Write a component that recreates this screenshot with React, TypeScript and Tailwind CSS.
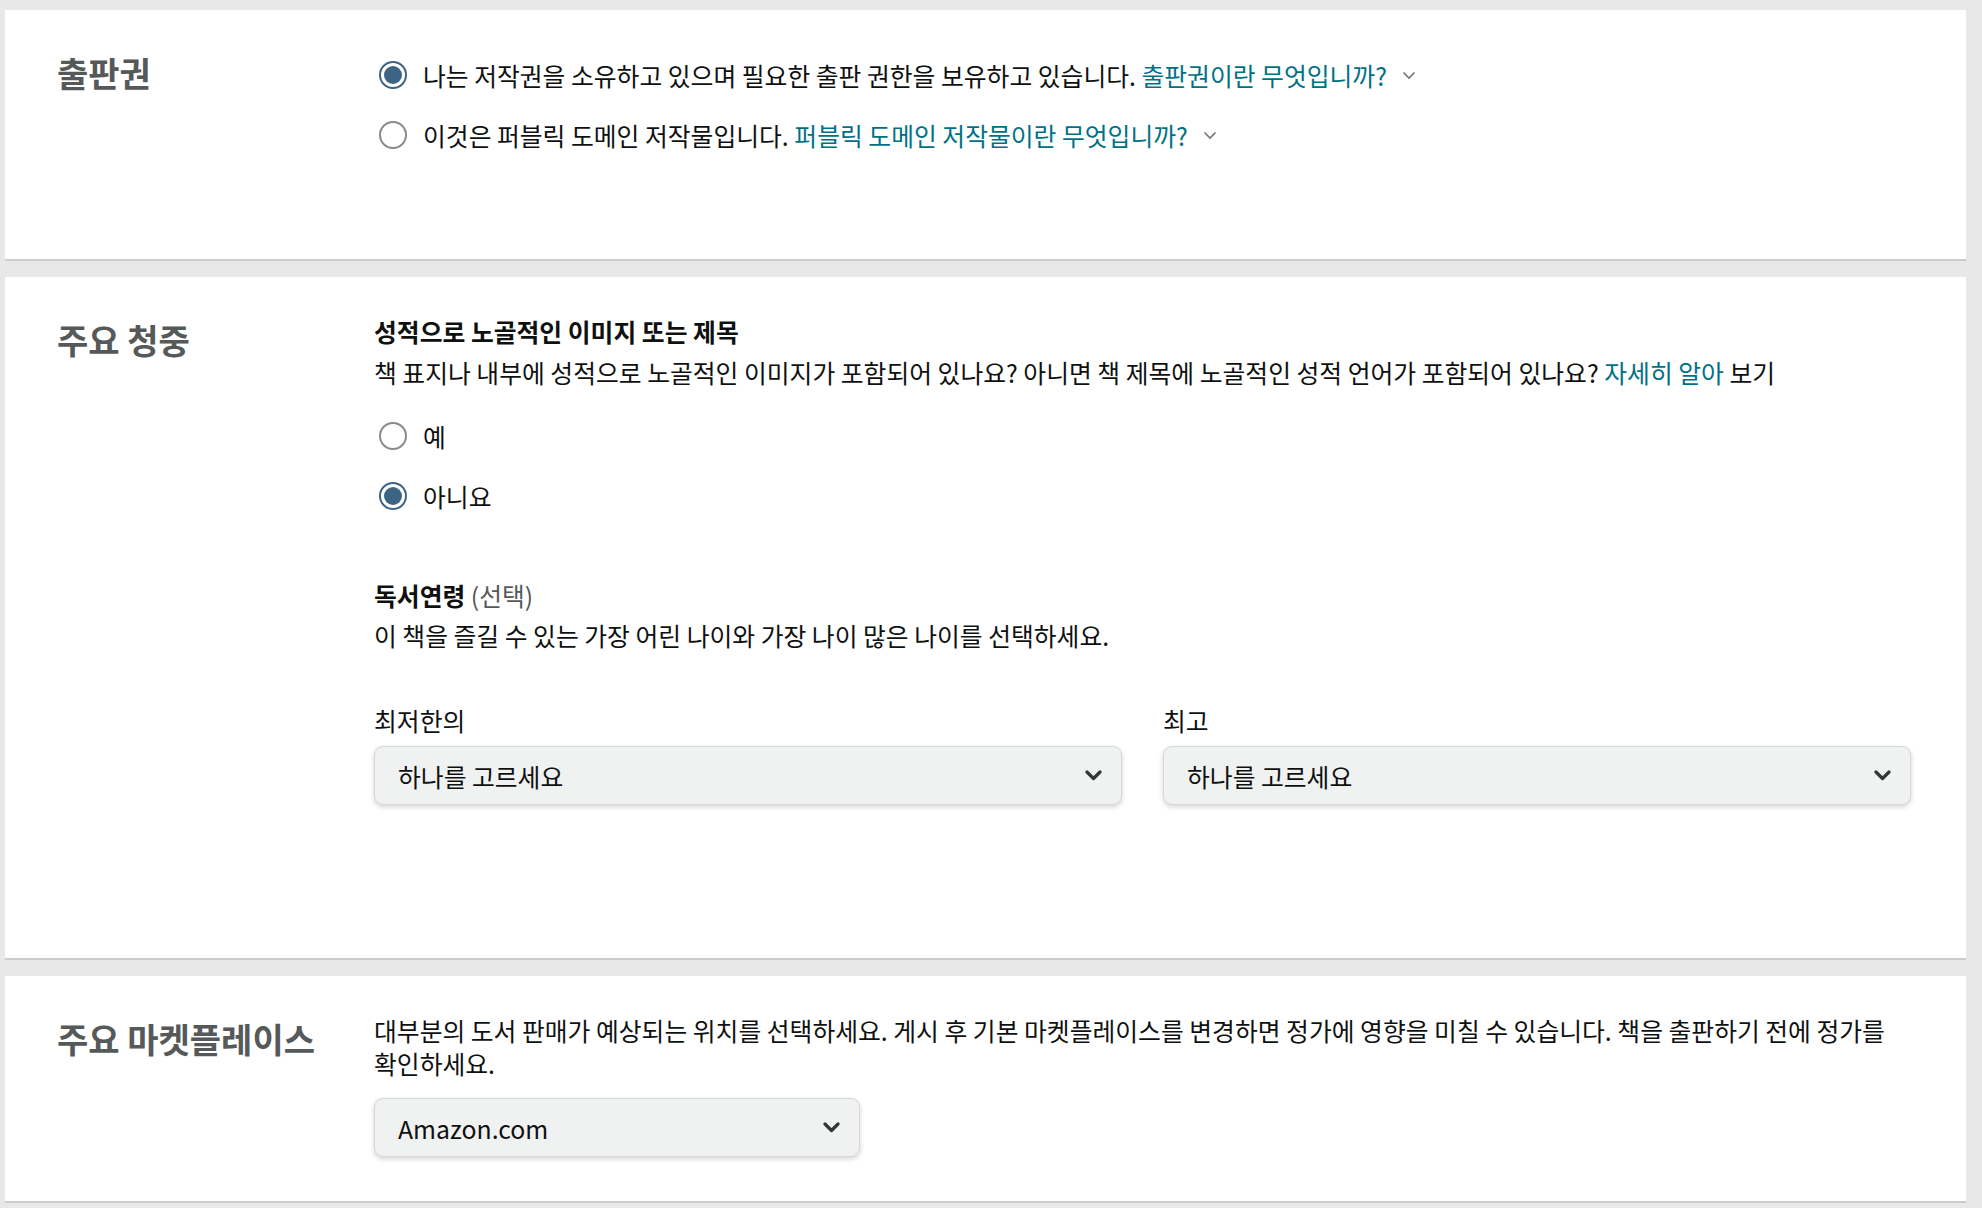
import React from "react";

function Radio({ checked }: { checked: boolean }) {
  return checked ? (
    <span className="ml-[5px] flex h-[28px] w-[28px] shrink-0 items-center justify-center rounded-full border-2 border-[#3d6385] bg-white">
      <span className="h-[18px] w-[18px] rounded-full bg-[#3d6385]" />
    </span>
  ) : (
    <span className="ml-[5px] h-[28px] w-[28px] shrink-0 rounded-full border-2 border-[#8a8a8a] bg-white" />
  );
}

function SmallChevron() {
  return (
    <svg width="14" height="9" viewBox="0 0 14 9" className="ml-[15px] inline-block shrink-0">
      <path d="M1.5 1.5 L7 7 L12.5 1.5" fill="none" stroke="#6f7373" strokeWidth="1.6" />
    </svg>
  );
}

function SelectBox({ value, width }: { value: string; width?: string }) {
  return (
    <div
      className={`flex h-[59px] items-center justify-between rounded-[9px] border border-[#d5d9d9] bg-[#f0f2f2] pl-[23px] pr-[19px] shadow-[0_2px_5px_rgba(15,17,17,0.18)] ${width ?? "w-full"}`}
    >
      <span className="text-[24.8px] text-[#0f1111]">{value}</span>
      <svg width="17" height="11" viewBox="0 0 17 11">
        <path d="M2 2 L8.5 8.5 L15 2" fill="none" stroke="#333636" strokeWidth="3.2" strokeLinecap="round" strokeLinejoin="round" />
      </svg>
    </div>
  );
}

export default function App() {
  return (
    <div className="flex min-h-screen flex-col gap-[16px] bg-[#e8e8e8] pb-[5px] pl-[5px] pr-[16px] pt-[10px] font-['Noto_Sans_CJK_KR','Noto_Sans',sans-serif] text-[24.8px] leading-[34px] text-[#0f1111]">
      {/* 출판권 */}
      <section className="flex border-b-2 border-[#cccccc] bg-white">
        <div className="w-[369px] shrink-0 pl-[52px] pt-[43px]">
          <h2 className="text-[34px] font-bold leading-[40px] text-[#565959]">출판권</h2>
        </div>
        <div className="flex flex-1 flex-col gap-[20px] pb-[104px] pr-[55px] pt-[45px]">
          <div className="flex h-[40px] items-center gap-[16px]">
            <Radio checked />
            <span className="flex items-center">
              <span>
                나는 저작권을 소유하고 있으며 필요한 출판 권한을 보유하고 있습니다.{" "}
                <span className="text-[#007185]">출판권이란 무엇입니까?</span>
              </span>
              <SmallChevron />
            </span>
          </div>
          <div className="flex h-[40px] items-center gap-[16px]">
            <Radio checked={false} />
            <span className="flex items-center">
              <span>
                이것은 퍼블릭 도메인 저작물입니다.{" "}
                <span className="text-[#007185]">퍼블릭 도메인 저작물이란 무엇입니까?</span>
              </span>
              <SmallChevron />
            </span>
          </div>
        </div>
      </section>

      {/* 주요 청중 */}
      <section className="flex border-b-2 border-[#cccccc] bg-white">
        <div className="w-[369px] shrink-0 pl-[52px] pt-[43px]">
          <h2 className="text-[34px] font-bold leading-[40px] text-[#565959]">주요 청중</h2>
        </div>
        <div className="flex flex-1 flex-col pb-[153px] pr-[55px] pt-[37px]">
          <h3 className="font-bold">성적으로 노골적인 이미지 또는 제목</h3>
          <p className="mt-[7px]">
            책 표지나 내부에 성적으로 노골적인 이미지가 포함되어 있나요? 아니면 책 제목에 노골적인 성적 언어가 포함되어 있나요?{" "}
            <span className="text-[#007185]">자세히 알아</span> 보기
          </p>
          <div className="mt-[27px] flex flex-col gap-[20px]">
            <div className="flex h-[40px] items-center gap-[16px]">
              <Radio checked={false} />
              <span>예</span>
            </div>
            <div className="flex h-[40px] items-center gap-[16px]">
              <Radio checked />
              <span>아니요</span>
            </div>
          </div>
          <h3 className="mt-[62px]">
            <span className="font-bold">독서연령</span> <span className="text-[#565959]">(선택)</span>
          </h3>
          <p className="mt-[6px]">이 책을 즐길 수 있는 가장 어린 나이와 가장 나이 많은 나이를 선택하세요.</p>
          <div className="mt-[51px] grid grid-cols-2 gap-x-[41px]">
            <div className="flex flex-col gap-[9px]">
              <label>최저한의</label>
              <SelectBox value="하나를 고르세요" />
            </div>
            <div className="flex flex-col gap-[9px]">
              <label>최고</label>
              <SelectBox value="하나를 고르세요" />
            </div>
          </div>
        </div>
      </section>

      {/* 주요 마켓플레이스 */}
      <section className="flex border-b-2 border-[#cccccc] bg-white">
        <div className="w-[369px] shrink-0 pl-[52px] pt-[43px]">
          <h2 className="text-[34px] font-bold leading-[40px] text-[#565959]">주요 마켓플레이스</h2>
        </div>
        <div className="flex flex-1 flex-col pb-[44px] pr-[55px] pt-[38px]">
          <p className="leading-[33px]">
            대부분의 도서 판매가 예상되는 위치를 선택하세요. 게시 후 기본 마켓플레이스를 변경하면 정가에 영향을 미칠 수 있습니다. 책을 출판하기 전에 정가를 확인하세요.
          </p>
          <div className="mt-[18px]">
            <SelectBox value="Amazon.com" width="w-[486px]" />
          </div>
        </div>
      </section>
    </div>
  );
}
